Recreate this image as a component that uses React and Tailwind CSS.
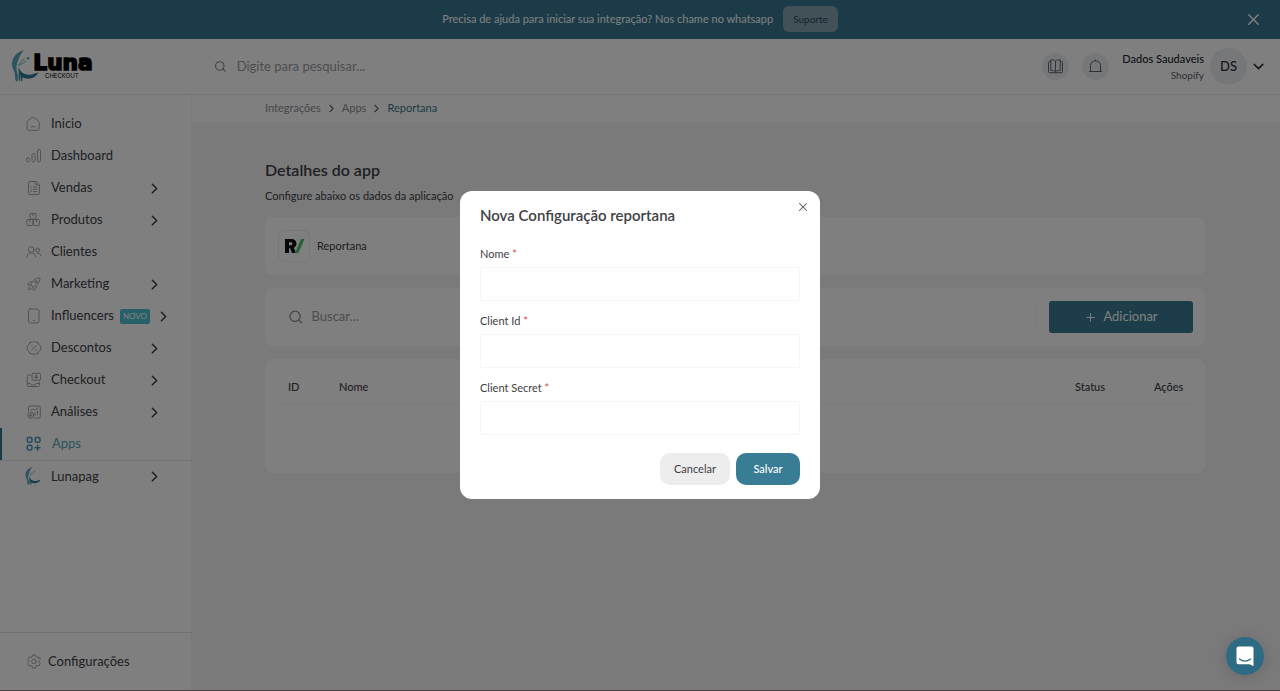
import { useState } from "react";
import { ChevronDown, ChevronRight, Plus, Search, X } from "lucide-react";

const menuItems = [
  { label: "Inicio", icon: "home" },
  { label: "Dashboard", icon: "bars" },
  { label: "Vendas", icon: "sheet", expandable: true },
  { label: "Produtos", icon: "boxes", expandable: true },
  { label: "Clientes", icon: "users" },
  { label: "Marketing", icon: "rocket", expandable: true },
  { label: "Influencers", icon: "phone", expandable: true, badge: "NOVO" },
  { label: "Descontos", icon: "discount", expandable: true },
  { label: "Checkout", icon: "checkout", expandable: true },
  { label: "Análises", icon: "analysis", expandable: true },
  { label: "Apps", icon: "apps", active: true },
];

const fields = [
  { id: "name", label: "Nome" },
  { id: "clientId", label: "Client Id" },
  { id: "clientSecret", label: "Client Secret" },
];

export default function App() {
  return (
    <div className="flex min-h-screen flex-col bg-[#f5f5f5] font-['Lato','Liberation_Sans',sans-serif] text-[#404145]">
      <TopBanner />
      <Header />
      <div className="flex flex-1">
        <Sidebar />
        <main className="min-w-0 flex-1">
          <Breadcrumb />
          <AppDetails />
        </main>
      </div>
      <ConfigModal />
      <ChatButton />
    </div>
  );
}

function TopBanner() {
  return (
    <div className="flex h-[39px] items-center bg-[#397790] px-[15px] pb-px text-[11px] text-white">
      <div className="w-6" />
      <div className="flex flex-1 items-center justify-center gap-[10px]">
        <span>Precisa de ajuda para iniciar sua integração? Nos chame no whatsapp</span>
        <button type="button" className="h-[26px] rounded-md bg-[#82a2ae] px-[10px] text-[10px] text-[#2b4a59]">
          Suporte
        </button>
      </div>
      <button type="button" aria-label="Fechar aviso" className="flex w-6 justify-center">
        <X size={19} strokeWidth={1.8} />
      </button>
    </div>
  );
}

function Header() {
  return (
    <header className="flex h-14 items-center border-b border-[#ebebee] bg-white pr-[13px] pl-3">
      <a href="#inicio" aria-label="Luna Checkout">
        <Logo />
      </a>
      <label className="ml-[114px] flex flex-1 items-center gap-[10px] text-[#9a9ba0]">
        <Search size={13} className="text-[#77787d]" />
        <input
          type="search"
          aria-label="Pesquisar"
          placeholder="Digite para pesquisar..."
          className="w-full bg-transparent text-[13px] outline-none placeholder:text-[#9a9ba0]"
        />
      </label>
      <div className="flex items-center gap-[13px] text-[#5a6270]">
        <button type="button" aria-label="Documentação" className="flex size-[27px] items-center justify-center rounded-full bg-[#eceef3]">
          <BookIcon />
        </button>
        <button type="button" aria-label="Notificações" className="flex size-[27px] items-center justify-center rounded-full bg-[#eceef3]">
          <BellIcon />
        </button>
      </div>
      <div className="ml-[13px] text-right">
        <p className="text-[11px] font-medium leading-4 text-[#202230]">Dados Saudaveis</p>
        <p className="text-[10px] leading-4 text-[#5a5e6b]">Shopify</p>
      </div>
      <button type="button" aria-label="Conta" className="ml-[6px] flex items-center gap-[3px] text-[#2b2d3a]">
        <span className="flex size-[37px] items-center justify-center rounded-full bg-[#eceef3] text-[13px] font-medium">DS</span>
        <ChevronDown size={17} strokeWidth={2} />
      </button>
    </header>
  );
}

function Sidebar() {
  return (
    <aside className="flex w-[192px] shrink-0 flex-col border-r border-[#f0f0f0] bg-white">
      <nav className="flex-1 pt-[13px] text-[13px]">
        {menuItems.map((item) => (
          <MenuItem key={item.label} item={item} />
        ))}
        <a href="#lunapag" className="flex h-8 items-center gap-[9px] border-t border-[#e2e4e8] pr-7 pl-[25px]">
          <MoonMark className="h-[19px] w-[17px]" />
          <span className="flex-1">Lunapag</span>
          <ChevronRight size={17} strokeWidth={2.2} />
        </a>
      </nav>
      <a href="#configuracoes" className="flex h-[59px] items-center gap-[6px] border-t border-[#e0e0e2] pl-[26px] text-[13px]">
        <MenuIcon name="settings" />
        Configurações
      </a>
    </aside>
  );
}

function MenuItem({ item }) {
  if (item.active) {
    return (
      <a href="#apps" className="flex h-8 items-center gap-[10px] border-l-2 border-[#397790] pl-6 text-[#55a5bd]">
        <MenuIcon name={item.icon} active />
        {item.label}
      </a>
    );
  }

  return (
    <a href={"#" + item.icon} className="flex h-8 items-center gap-[9px] pr-5 pl-[26px]">
      <MenuIcon name={item.icon} />
      <span>{item.label}</span>
      {item.badge ? (
        <span className="-ml-[3px] flex h-[15px] items-center rounded-xs bg-[#4cc0d2] px-[3px] text-[8px] text-white">{item.badge}</span>
      ) : (
        <span className="flex-1" />
      )}
      {item.expandable && (
        <ChevronRight size={17} strokeWidth={2.2} className={item.badge ? "-ml-1 shrink-0" : "mr-2 shrink-0"} />
      )}
    </a>
  );
}

function Breadcrumb() {
  return (
    <nav aria-label="Trilha" className="flex h-[27px] items-center gap-1 bg-white pl-[73px] text-[11px] text-[#8b8c91]">
      <a href="#integracoes">Integrações</a>
      <ChevronRight size={13} strokeWidth={2} className="text-[#66676c]" />
      <a href="#apps">Apps</a>
      <ChevronRight size={13} strokeWidth={2} className="text-[#66676c]" />
      <a href="#reportana" className="text-[#397790]">Reportana</a>
    </nav>
  );
}

function AppDetails() {
  return (
    <section className="pt-9 pr-[75px] pl-[73px]">
      <h1 className="text-base font-semibold leading-6">Detalhes do app</h1>
      <p className="mt-1 text-[11px] leading-5">Configure abaixo os dados da aplicação</p>

      <div className="mt-[11px] flex h-[58px] items-center gap-[7px] rounded-lg bg-white px-[13px]">
        <ReportanaLogo />
        <span className="text-[11px]">Reportana</span>
      </div>

      <div className="mt-[13px] flex h-[58px] items-center gap-3 rounded-lg bg-white px-3">
        <label className="flex h-8 flex-1 items-center gap-2 rounded-sm border border-[#f8f8f9] px-[10px] text-[#8d8e93]">
          <Search size={16} />
          <input
            type="search"
            aria-label="Buscar"
            placeholder="Buscar..."
            className="w-full bg-transparent text-[13px] outline-none placeholder:text-[#9a9ba0]"
          />
        </label>
        <button type="button" className="flex h-8 w-36 items-center justify-center gap-[6px] rounded-[3px] bg-[#387b92] text-[13px] text-white">
          <Plus size={13} strokeWidth={1.8} />
          Adicionar
        </button>
      </div>

      <div className="mt-[13px] h-[114px] rounded-lg bg-white px-[14px] pt-[13px]">
        <table className="w-full table-fixed text-left text-[11px]">
          <thead>
            <tr className="h-[31px] border-b border-[#f6f6f7]">
              <th className="w-[51px] pl-[9px] font-medium">ID</th>
              <th className="pl-[9px] font-medium">Nome</th>
              <th className="w-[79px] font-medium">Status</th>
              <th className="w-[37px] font-medium">Ações</th>
            </tr>
          </thead>
        </table>
      </div>
    </section>
  );
}

function ConfigModal() {
  const [values, setValues] = useState({ name: "", clientId: "", clientSecret: "" });

  const handleChange = (e) => {
    const { name, value } = e.target;
    setValues((prev) => ({ ...prev, [name]: value }));
  };

  return (
    <div className="fixed inset-0 flex items-center justify-center border-b border-[#4d4548] bg-black/50">
      <div role="dialog" aria-labelledby="modal-title" className="relative w-[360px] rounded-xl bg-white px-5 pt-3 pb-[14px]">
        <button type="button" aria-label="Fechar" className="absolute top-[9px] right-[10px] text-[#55565a]">
          <X size={14} strokeWidth={1.8} />
        </button>
        <h2 id="modal-title" className="text-[15px] font-semibold leading-6">Nova Configuração reportana</h2>
        <form onSubmit={(e) => e.preventDefault()} className="mt-[18px]">
          <div className="flex flex-col gap-[11px]">
            {fields.map((field) => (
              <div key={field.id}>
                <label htmlFor={field.id} className="block text-[11px] leading-[18px]">
                  {field.label} <span className="text-[#e5484d]">*</span>
                </label>
                <input
                  id={field.id}
                  name={field.id}
                  type="text"
                  required
                  value={values[field.id]}
                  onChange={handleChange}
                  className="mt-1 block h-[34px] w-full rounded-xs border border-[#f6f6f7] px-3 text-[11px] outline-none"
                />
              </div>
            ))}
          </div>
          <div className="mt-[18px] flex justify-end gap-[6px] text-[11px]">
            <button type="button" className="h-8 w-[70px] rounded-[10px] bg-[#ededee]">Cancelar</button>
            <button type="submit" className="h-8 w-16 rounded-[10px] bg-[#387d95] font-medium text-white">Salvar</button>
          </div>
        </form>
      </div>
    </div>
  );
}

function ChatButton() {
  return (
    <button
      type="button"
      aria-label="Abrir chat"
      className="fixed right-4 bottom-4 flex size-[38px] items-center justify-center rounded-full bg-[#2d6b85] shadow-[0_2px_14px_rgba(0,0,0,0.15)]"
    >
      <svg width="18" height="20" viewBox="0 0 18 20" fill="none">
        <path d="M2.5 0.5h13a2 2 0 0 1 2 2V20l-4-1.8h-11a2 2 0 0 1-2-2V2.500a2 2 0 0 1 2-2z" fill="#fff" />
        <path d="M3.500 13c3.300 2.600 7.700 2.600 11 0" stroke="#2d6b85" strokeWidth="1.300" strokeLinecap="round" />
      </svg>
    </button>
  );
}

function Logo() {
  return (
    <svg width="88" height="34" viewBox="0 0 264 102">
      <MoonShapes />
      <text x="64" y="60" fontFamily="'DejaVu Sans', sans-serif" fontWeight="700" fontSize="65" fill="#000" stroke="#000" strokeWidth="5">Luna</text>
      <text x="99" y="84" fontFamily="Inter, sans-serif" fontWeight="400" fontSize="18" fill="#000">CHECKOUT</text>
    </svg>
  );
}

function MoonMark({ className }) {
  return (
    <svg viewBox="0 0 84 100" className={className}>
      <MoonShapes />
    </svg>
  );
}

function MoonShapes() {
  return (
    <>
      <path d="M36 0C14 6 0 22 0 42c0 9 4 18 8 26l2 22 4 6 3-5 1-16c-6-16-6-30 2-48C24 17 29 8 36 0z" fill="#5aa6be" />
      <path d="M18 46c6-3 9-14 20-20M20 48c8-8 12-7 22-15" stroke="#68aec4" strokeWidth="3" fill="none" />
      <circle cx="48" cy="25" r="4" fill="#68aec4" />
      <path d="M20 50c2 12 12 22 28 24 12 1 24-4 32-8-6 13-18 20-32 20-6 0-13-2-17-4v12l-4-2-3-22-4-8z" fill="#2c7a97" />
      <path d="M22 58v34" stroke="#3d8ba5" strokeWidth="4" />
    </>
  );
}

function ReportanaLogo() {
  return (
    <span className="flex size-8 items-center justify-center rounded-md border border-[#efeff0]">
      <svg width="22" height="18" viewBox="0 0 22 18">
        <path d="M2 2h6.500c3 0 5 1.800 5 4.600 0 2-1 3.400-2.600 4.100L13 16H9l-1.900-4.700H6V16H2zM6 5.300v3h1.800c1 0 1.600-.6 1.600-1.500S8.800 5.300 7.800 5.300z" fill="#111" fillRule="evenodd" />
        <path d="M18 2h3.500l-6 14H12z" fill="#4cc96c" />
      </svg>
    </span>
  );
}

function BookIcon() {
  return (
    <svg width="15" height="15" viewBox="0 0 15 15" fill="none" stroke="currentColor" strokeWidth="1" strokeLinejoin="round">
      <path d="M7.500 2C6.500 1 5 .8 2.800 .8v10.700c2.200 0 3.700.2 4.700 1.200 1-1 2.500-1.200 4.700-1.200V.8C10 .8 8.500 1 7.500 2zM7.500 2v10.700" />
      <path d="M2.800 2.500H1.500a1 1 0 0 0-1 1v9a1.200 1.200 0 0 0 1.200 1.200h11.600a1.200 1.200 0 0 0 1.200-1.200v-9a1 1 0 0 0-1-1h-1.300" />
    </svg>
  );
}

function BellIcon() {
  return (
    <svg width="13" height="15" viewBox="0 0 13 15" fill="none" stroke="currentColor" strokeWidth="1" strokeLinejoin="round">
      <path d="M1.500 12.500V6.500c0-2.700 2-4.700 5-4.700s5 2 5 4.700v6M0.500 12.500h12M6.500 1.800V1" strokeLinecap="round" />
    </svg>
  );
}

// 16px line icons of the side menu
const iconShapes = {
  home: (
    <>
      <path d="M1 6.500c0-.8.300-1.400 1-1.900L6 1.600a1.800 1.800 0 0 1 2.200 0l4 3c.6.500 1 1.100 1 1.900v6a1.800 1.800 0 0 1-1.800 1.800H2.800A1.800 1.800 0 0 1 1 12.500z" />
      <path d="M5 10.800h4" />
    </>
  ),
  bars: (
    <>
      <rect x="0.500" y="10" width="2.800" height="4" rx="1.200" />
      <rect x="6" y="5.500" width="3" height="8.500" rx="1.400" />
      <rect x="11.500" y="1.500" width="3" height="12.500" rx="1.400" />
    </>
  ),
  sheet: (
    <>
      <path d="M4 1.500h6l3.500 3.300V13a1.500 1.500 0 0 1-1.500 1.500H4A1.500 1.500 0 0 1 2.500 13V3A1.500 1.500 0 0 1 4 1.500zM9.800 1.700V5h3.500" />
      <path d="M5 7h.8M7.500 7H11M5 9.300h.8M7.500 9.300H11M5 11.600h.8M7.500 11.600H11" />
    </>
  ),
  boxes: (
    <>
      <rect x="4" y="1.500" width="6" height="5.500" rx="1" />
      <rect x="0.800" y="7.500" width="6" height="6" rx="1" />
      <rect x="7.500" y="7.500" width="6" height="6" rx="1" />
      <path d="M7 1.500v2.300M3.800 7.500v2.300M10.500 7.500v2.300" />
    </>
  ),
  users: (
    <>
      <circle cx="5.200" cy="5.500" r="2.800" />
      <path d="M0.800 13c.5-2.800 2-4 4.400-4s4 1.200 4.500 4" />
      <circle cx="11.600" cy="6" r="1.900" />
      <path d="M11 9c2.300-.2 3.700 1 4 3" />
    </>
  ),
  rocket: (
    <>
      <path d="M5 8.500C6.500 4.500 9.500 2 14 2c0 4.500-2.500 7.500-6.500 9z" />
      <path d="M6 6H3.500L1.500 8.500l3 .5M10 10v2.500L7.500 14.500 7 11.500M4 10.500c-1.300.5-1.800 2-1.500 3.300 1.300.2 2.700-.3 3-1.500" />
      <circle cx="10" cy="6" r="1.200" />
    </>
  ),
  phone: (
    <>
      <rect x="2.500" y="1" width="10.500" height="14" rx="2" />
      <path d="M7.300 12.500h1" />
    </>
  ),
  discount: (
    <>
      <path d="M8 1.200l2 1 2.200.2.700 2.100L14.700 6v4l-1.800 1.400-.7 2.100-2.200.2-2 1-2-1-2.200-.2-.7-2.100L1.300 10V6l1.800-1.500.7-2.100L6 2.200z" />
      <path d="M5.800 10l4.400-4.300M5.700 6.200h.6M9.700 9.800h.6" />
    </>
  ),
  checkout: (
    <>
      <path d="M5 3H2.500A1.200 1.200 0 0 0 1.300 4.200v9.300a1 1 0 0 0 1 1h10.200a1 1 0 0 0 1-1V10M1.500 11.500h3l1 1.500h3.500l1-1.500h3" />
      <rect x="6" y="1.300" width="8.500" height="7" rx="1.300" />
      <path d="M10.200 3v3.600M9 5.500h2.400M9 4h2.400" />
    </>
  ),
  analysis: (
    <>
      <path d="M2.500 7V3.500A1.500 1.500 0 0 1 4 2h9a1.300 1.300 0 0 1 1.300 1.300v9.400A1.300 1.300 0 0 1 13 14H9" />
      <circle cx="4.800" cy="11.200" r="3" />
      <path d="M4.800 9.800v2.800M3.400 11.200h2.800M5 6.500l2-1.500 2 1 3-2M9 8.500V11M11.500 7v4" />
    </>
  ),
  apps: (
    <>
      <rect x="1.200" y="1.500" width="4.800" height="4.800" rx="1.600" />
      <rect x="9.200" y="1.500" width="4.800" height="4.800" rx="1.600" />
      <rect x="1.200" y="9.300" width="4.800" height="4.800" rx="1.600" />
      <path d="M11.600 9.300v5M9.100 11.800h5" />
    </>
  ),
  settings: (
    <>
      <path d="M6.500 1h2.800l.5 1.900 1.100.6 1.900-.6 1.500 2.400L13 6.700v1.500l1.300 1.400-1.500 2.400-1.900-.5-1.100.6-.5 2H6.500l-.5-2-1.100-.6-1.900.5-1.500-2.400 1.300-1.400V6.700L1.500 5.300 3 2.900l1.900.6L6 2.900z" strokeLinejoin="round" />
      <circle cx="7.900" cy="7.500" r="2.300" />
    </>
  ),
};

function MenuIcon({ name, active }) {
  return (
    <svg
      width="16"
      height="16"
      viewBox="0 0 16 16"
      fill="none"
      stroke="currentColor"
      strokeWidth={active ? 1.5 : 1}
      strokeLinecap="round"
      className={active ? "shrink-0 text-[#4797b0]" : "shrink-0 text-[#a5a6aa]"}
    >
      {iconShapes[name]}
    </svg>
  );
}
